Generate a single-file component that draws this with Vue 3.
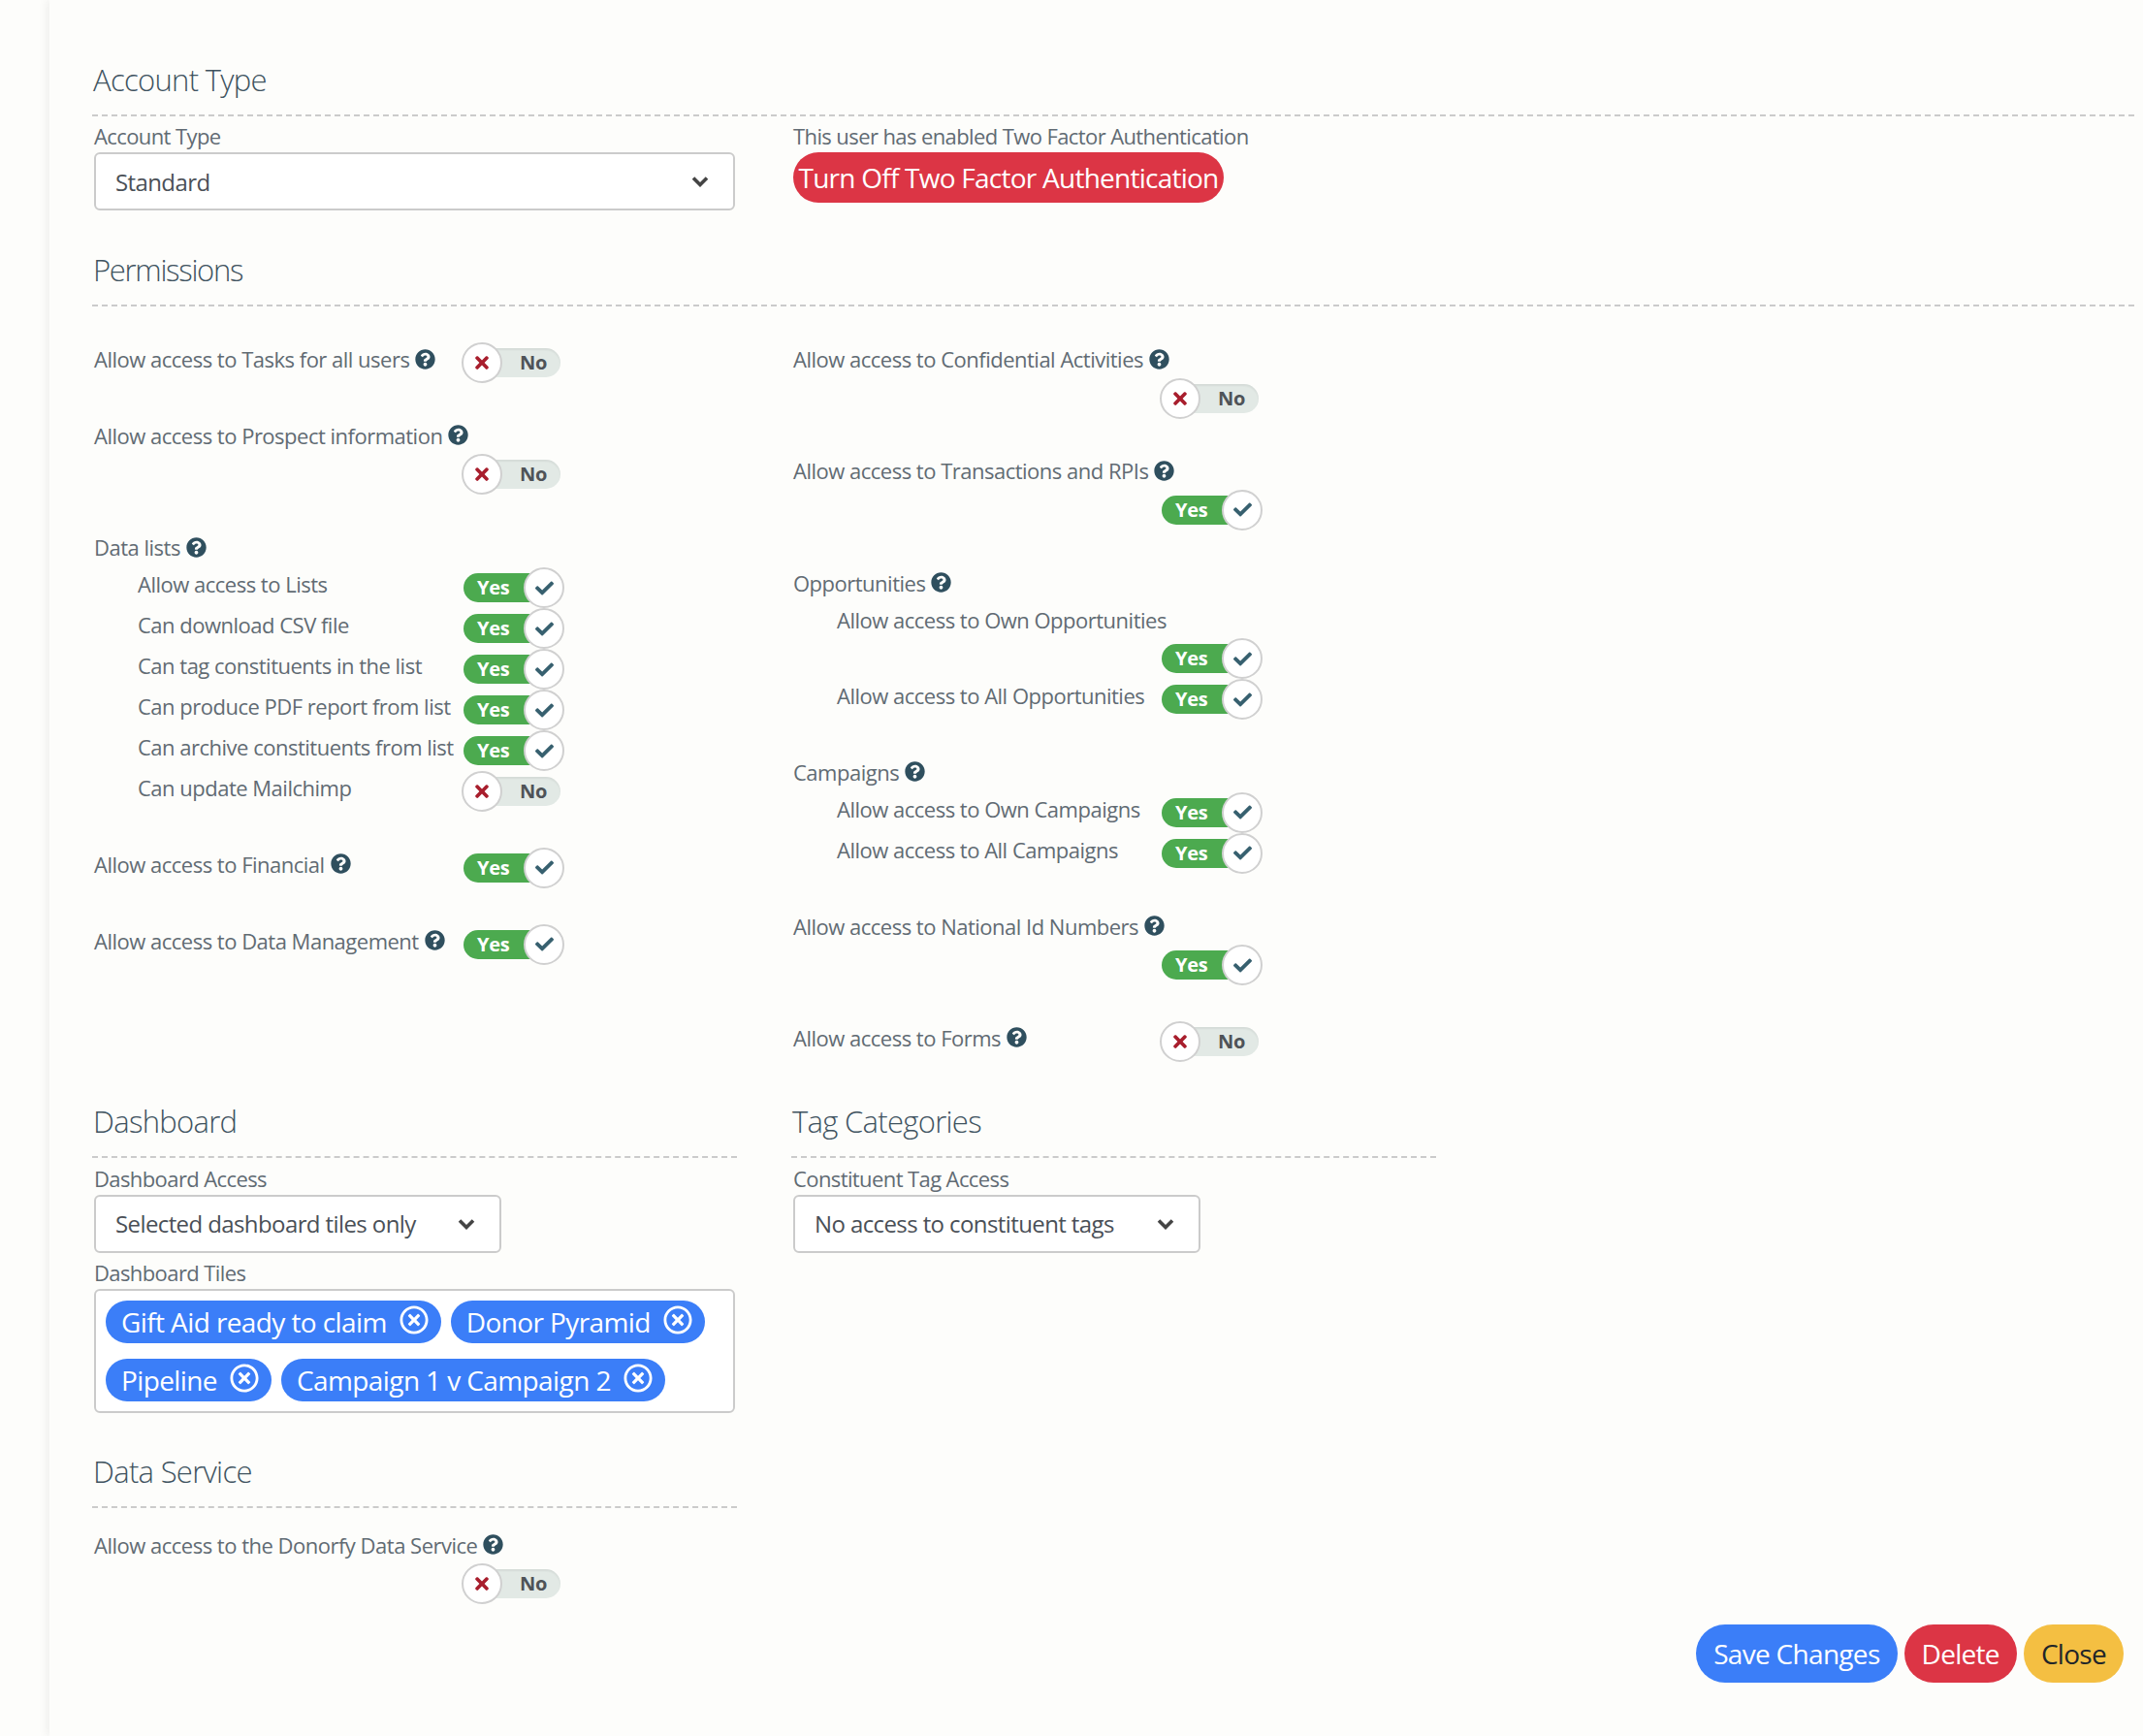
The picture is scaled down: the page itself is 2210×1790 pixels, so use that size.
<script setup>
const help = 'M504 256c0 136.997-111.043 248-248 248S8 392.997 8 256C8 119.083 119.043 8 256 8s248 111.083 248 248zM262.655 90c-54.497 0-89.255 22.957-116.549 63.758-3.536 5.286-2.353 12.415 2.715 16.258l34.699 26.31c5.205 3.947 12.621 3.008 16.665-2.122 17.864-22.658 30.113-35.797 57.303-35.797 20.429 0 45.698 13.148 45.698 32.958 0 14.976-12.363 22.667-32.534 33.976C247.128 238.528 216 254.941 216 296v4c0 6.627 5.373 12 12 12h56c6.627 0 12-5.373 12-12v-1.333c0-28.462 83.186-29.647 83.186-106.667 0-58.002-60.165-102-116.531-102zM256 338c-25.365 0-46 20.635-46 46 0 25.364 20.635 46 46 46s46-20.636 46-46c0-25.365-20.635-46-46-46z'
const timesCircle = 'M256 8C119 8 8 119 8 256s111 248 248 248 248-111 248-248S393 8 256 8zm0 448c-110.500 0-200-89.500-200-200S145.500 56 256 56s200 89.500 200 200-89.500 200-200 200zm101.800-262.200L295.600 256l62.200 62.200c4.700 4.700 4.700 12.300 0 17l-22.600 22.600c-4.700 4.700-12.300 4.700-17 0L256 295.600l-62.200 62.200c-4.700 4.700-12.300 4.700-17 0l-22.600-22.600c-4.700-4.700-4.700-12.300 0-17l62.200-62.200-62.200-62.200c-4.700-4.700-4.700-12.300 0-17l22.600-22.600c4.700-4.700 12.300-4.700 17 0l62.200 62.200 62.200-62.200c4.700-4.700 12.300-4.700 17 0l22.600 22.600c4.700 4.700 4.700 12.300 0 17z'
const check = 'M173.898 439.404l-166.4-166.4c-9.997-9.997-9.997-26.206 0-36.204l36.203-36.204c9.997-9.998 26.207-9.998 36.204 0L192 312.69 432.095 72.596c9.997-9.997 26.207-9.997 36.204 0l36.203 36.204c9.997 9.997 9.997 26.206 0 36.204l-294.4 294.401c-9.998 9.997-26.207 9.997-36.204-.001z'
const times = 'M242.72 256l100.070-100.070c12.280-12.280 12.280-32.190 0-44.480l-22.240-22.240c-12.280-12.280-32.190-12.280-44.480 0L176 189.280 75.930 89.210c-12.280-12.280-32.190-12.280-44.480 0L9.210 111.450c-12.280 12.280-12.280 32.190 0 44.480L109.280 256 9.210 356.070c-12.280 12.280-12.280 32.190 0 44.480l22.240 22.240c12.280 12.280 32.200 12.280 44.480 0L176 322.720l100.070 100.070c12.280 12.280 32.200 12.280 44.480 0l22.240-22.240c12.280-12.280 12.280-32.190 0-44.480L242.720 256z'

const left = [
  { items: [{ label: 'Allow access to Tasks for all users', help: true, on: false }] },
  { items: [{ label: 'Allow access to Prospect information', help: true, on: false, stack: true }] },
  { title: 'Data lists', items: [
    { label: 'Allow access to Lists', on: true, sub: true },
    { label: 'Can download CSV file', on: true, sub: true },
    { label: 'Can tag constituents in the list', on: true, sub: true },
    { label: 'Can produce PDF report from list', on: true, sub: true },
    { label: 'Can archive constituents from list', on: true, sub: true },
    { label: 'Can update Mailchimp', on: false, sub: true },
  ] },
  { items: [{ label: 'Allow access to Financial', help: true, on: true }] },
  { items: [{ label: 'Allow access to Data Management', help: true, on: true }] },
]
const right = [
  { items: [{ label: 'Allow access to Confidential Activities', help: true, on: false, stack: true }] },
  { items: [{ label: 'Allow access to Transactions and RPIs', help: true, on: true, stack: true }] },
  { title: 'Opportunities', items: [
    { label: 'Allow access to Own Opportunities', on: true, sub: true, stack: true },
    { label: 'Allow access to All Opportunities', on: true, sub: true },
  ] },
  { title: 'Campaigns', items: [
    { label: 'Allow access to Own Campaigns', on: true, sub: true },
    { label: 'Allow access to All Campaigns', on: true, sub: true },
  ] },
  { items: [{ label: 'Allow access to National Id Numbers', help: true, on: true, stack: true }] },
  { items: [{ label: 'Allow access to Forms', help: true, on: false }] },
]
const chips = ['Gift Aid ready to claim', 'Donor Pyramid', 'Pipeline', 'Campaign 1 v Campaign 2']
const dataService = [{ items: [{ label: 'Allow access to the Donorfy Data Service', help: true, on: false, stack: true }] }]
const permCols = [left, right]
</script>

<template>
  <div class="page">
    <main class="main">
      <section class="section first">
        <h2 class="heading">Account Type</h2>
        <div class="two">
          <div class="col">
            <label class="field-label">Account Type</label>
            <div class="select full">
              <span>Standard</span>
              <svg class="chev" viewBox="0 0 18 12"><path d="M2 2.500 9 9.500 16 2.500" /></svg>
            </div>
          </div>
          <div class="col">
            <label class="field-label">This user has enabled Two Factor Authentication</label>
            <button class="turn-off">Turn Off Two Factor Authentication</button>
          </div>
        </div>
      </section>

      <section class="section perm-section">
        <h2 class="heading">Permissions</h2>
        <div class="two perms">
          <div v-for="(col, ci) in permCols" :key="ci" class="col">
            <div v-for="(group, gi) in col" :key="gi" class="group">
              <div v-if="group.title" class="group-title">
                <span>{{ group.title }}</span>
                <svg class="help" viewBox="0 0 512 512"><path :d="help" /></svg>
              </div>
              <div v-for="item in group.items" :key="item.label" class="perm" :class="{ stack: item.stack, sub: item.sub }">
                <div class="perm-label">
                  <span>{{ item.label }}</span>
                  <svg v-if="item.help" class="help" viewBox="0 0 512 512"><path :d="help" /></svg>
                </div>
                <div class="toggle" :class="item.on ? 'on' : 'off'">
                  <span class="toggle-text">{{ item.on ? 'Yes' : 'No' }}</span>
                  <span class="knob">
                    <svg v-if="item.on" class="knob-check" viewBox="0 0 512 512"><path :d="check" /></svg>
                    <svg v-else class="knob-x" viewBox="0 0 352 512"><path :d="times" /></svg>
                  </span>
                </div>
              </div>
            </div>
          </div>
        </div>
      </section>

      <div class="two lower">
        <div class="col">
          <section class="section narrow">
            <h2 class="heading">Dashboard</h2>
            <label class="field-label">Dashboard Access</label>
            <div class="select dash">
              <span>Selected dashboard tiles only</span>
              <svg class="chev" viewBox="0 0 18 12"><path d="M2 2.500 9 9.500 16 2.500" /></svg>
            </div>
            <label class="field-label tiles-label">Dashboard Tiles</label>
            <div class="tiles">
              <span v-for="c in chips" :key="c" class="chip">
                {{ c }}
                <svg class="chip-x" viewBox="0 0 512 512"><path :d="timesCircle" /></svg>
              </span>
            </div>
          </section>
          <section class="section narrow data-service">
            <h2 class="heading">Data Service</h2>
            <div v-for="(group, gi) in dataService" :key="gi" class="ds-body">
              <div v-for="item in group.items" :key="item.label" class="perm stack">
                <div class="perm-label">
                  <span>{{ item.label }}</span>
                  <svg class="help" viewBox="0 0 512 512"><path :d="help" /></svg>
                </div>
                <div class="toggle off">
                  <span class="toggle-text">No</span>
                  <span class="knob">
                    <svg class="knob-x" viewBox="0 0 352 512"><path :d="times" /></svg>
                  </span>
                </div>
              </div>
            </div>
          </section>
        </div>
        <div class="col">
          <section class="section narrow">
            <h2 class="heading">Tag Categories</h2>
            <label class="field-label">Constituent Tag Access</label>
            <div class="select dash">
              <span>No access to constituent tags</span>
              <svg class="chev" viewBox="0 0 18 12"><path d="M2 2.500 9 9.500 16 2.500" /></svg>
            </div>
          </section>
        </div>
      </div>

      <div class="actions">
        <button class="btn blue">Save Changes</button>
        <button class="btn red">Delete</button>
        <button class="btn yellow">Close</button>
      </div>
    </main>
  </div>
</template>

<style>
html, body { margin: 0; background: #fdfdfb; }
</style>

<style scoped>
.page {
  width: 2210px;
  min-height: 1790px;
  background: #fdfdfb;
  font-family: "Open Sans", "Noto Sans", sans-serif;
  color: #616b73;
  overflow: hidden;
}
.main {
  margin-left: 51px;
  min-height: 1790px;
  box-sizing: border-box;
  padding: 0 9px 0 44px;
  box-shadow: -4px 0 8px rgba(0, 0, 0, 0.05);
}
.section.first { padding-top: 58px; }
.perm-section { margin-top: 37px; }
.heading {
  margin: 0 0 5px;
  height: 60px;
  line-height: 48px;
  font-size: 31px;
  font-weight: 300;
  color: #3f5360;
  letter-spacing: -0.7px;
  border-bottom: 2px dashed #cbcbcb;
  padding-left: 1px;
}
.perm-section .heading { letter-spacing: -1.3px; }
.two { display: flex; gap: 56px; }
.col { width: 665px; flex: none; padding-left: 2px; box-sizing: border-box; }
.field-label {
  display: block;
  font-size: 22px;
  line-height: 30px;
  letter-spacing: -0.6px;
  margin-bottom: 2px;
}
.select {
  height: 60px;
  box-sizing: border-box;
  border: 2px solid #cbcbcb;
  border-radius: 6px;
  background: #fff;
  display: flex;
  align-items: center;
  justify-content: space-between;
  padding: 0 25px 0 20px;
  font-size: 24px;
  letter-spacing: -0.6px;
  color: #4a5057;
}
.select.full { width: 661px; }
.select.dash { width: 420px; }
.chev { width: 18px; height: 12px; fill: none; stroke: #444; stroke-width: 3.600; }
.turn-off {
  display: block;
  height: 52px;
  width: 444px;
  padding: 0;
  border: none;
  border-radius: 26px;
  background: #dc3545;
  color: #fff;
  font-family: inherit;
  font-size: 28px;
  letter-spacing: -0.75px;
  white-space: nowrap;
}
.perms { margin-top: 37px; }
.group { margin-bottom: 36.800px; display: flow-root; }
.group-title {
  height: 30px;
  line-height: 30px;
  margin: 2px 0 6px;
  font-size: 22px;
  letter-spacing: -0.5px;
  display: flex;
  align-items: center;
  gap: 6px;
}
.perm { display: flex; height: 42px; }
.perm.stack { display: flow-root; height: 78.500px; }
.perm-label {
  width: 379px;
  flex: none;
  height: 30px;
  line-height: 30px;
  margin-top: 2px;
  font-size: 22px;
  letter-spacing: -0.5px;
  display: flex;
  align-items: center;
  gap: 6px;
  white-space: nowrap;
  box-sizing: border-box;
}
.stack .perm-label { width: auto; margin-bottom: 4.500px; }
.sub .perm-label { padding-left: 45px; }
.col + .col .perm-label { width: 378px; }
.col + .col .stack .perm-label { width: auto; }
.help { width: 21px; height: 21px; flex: none; fill: #2f4f5e; }
.toggle {
  position: relative;
  width: 104px;
  height: 42px;
  flex: none;
  box-sizing: border-box;
}
.stack .toggle { margin-left: 379px; }
.col + .col .stack .toggle { margin-left: 378px; }
.toggle::before {
  content: "";
  position: absolute;
  top: 6px;
  height: 30px;
  border-radius: 15px;
}
.toggle.off::before {
  left: 2px;
  width: 100px;
  background: #e2e9e5;
  box-shadow: inset 0 2px 2px rgba(0, 0, 0, 0.06);
}
.toggle.on::before {
  left: 2px;
  width: 90px;
  background: #4caa4f;
}
.toggle-text {
  position: absolute;
  top: 6px;
  height: 30px;
  line-height: 30px;
  font-size: 20px;
  font-weight: 700;
  letter-spacing: -0.3px;
}
.off .toggle-text { left: 60px; color: #4f5358; }
.on .toggle-text { left: 16px; color: #fff; }
.knob {
  position: absolute;
  top: 0;
  width: 42px;
  height: 42px;
  box-sizing: border-box;
  border: 2px solid #d0d0d0;
  border-radius: 50%;
  background: #fff;
  display: flex;
  align-items: center;
  justify-content: center;
}
.off .knob { left: 0; }
.on .knob { left: 64px; }
.knob-x { width: 14px; height: 20px; fill: #a81e2d; }
.knob-check { width: 19px; height: 19px; fill: #37606f; }
.lower { margin-top: 0; }
.lower .heading { margin-bottom: 6px; }
.lower .col { padding-left: 0; }
.narrow .field-label, .narrow .select, .narrow .tiles, .ds-body { margin-left: 2px; }
.tiles-label { margin-top: 5px; }
.tiles {
  width: 661px;
  height: 128px;
  box-sizing: border-box;
  border: 2px solid #cbcbcb;
  border-radius: 6px;
  background: #fff;
  padding: 10px 10px;
  display: flex;
  flex-wrap: wrap;
  align-content: flex-start;
  column-gap: 10px;
  row-gap: 16px;
}
.chip {
  height: 44px;
  border-radius: 22px;
  background: #3b7ef8;
  color: #fff;
  font-size: 28px;
  letter-spacing: -0.6px;
  line-height: 44px;
  padding: 0 13px 0 16px;
  display: inline-flex;
  align-items: center;
  gap: 13px;
  white-space: nowrap;
}
.chip-x { width: 30px; height: 30px; fill: #fff; margin-top: -4px; }
.data-service { margin-top: 36px; }
.ds-body { margin-top: 21px; }
.actions {
  display: flex;
  justify-content: flex-end;
  gap: 7px;
  padding-right: 11px;
  margin-top: 21px;
}
.btn {
  height: 60px;
  border: none;
  border-radius: 30px;
  padding: 0 18px;
  font-family: inherit;
  font-size: 28px;
  letter-spacing: -0.7px;
  white-space: nowrap;
}
.blue { background: #3b7ef8; color: #fff; }
.red { background: #dc3545; color: #fff; }
.yellow { background: #f4bf42; color: #212529; }
</style>
